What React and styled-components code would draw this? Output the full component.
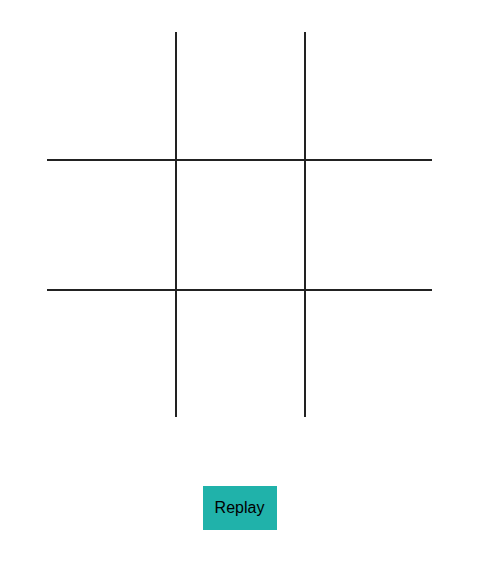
import React, { useState } from "react";
import styled, { createGlobalStyle } from "styled-components";

const GlobalStyle = createGlobalStyle`
  body {
    margin: 0;
    background: #fff;
    font-family: "Liberation Sans", Arial, sans-serif;
  }
`;

const App = () => {
  const [cells, setCells] = useState(Array(9).fill(null));
  const [xNext, setXNext] = useState(true);

  const play = (i) => {
    if (cells[i]) return;
    const next = [...cells];
    next[i] = xNext ? "X" : "O";
    setCells(next);
    setXNext(!xNext);
  };

  const replay = () => {
    setCells(Array(9).fill(null));
    setXNext(true);
  };

  return (
    <>
      <GlobalStyle />
      <Wrapper>
        <Board>
          {cells.map((value, i) => (
            <Cell
              key={i}
              $right={i % 3 < 2}
              $bottom={i < 6}
              onClick={() => play(i)}
            >
              {value}
            </Cell>
          ))}
        </Board>
        <ReplayButton onClick={replay}>Replay</ReplayButton>
      </Wrapper>
    </>
  );
};

export default App;

const Wrapper = styled.main`
  width: 385px;
  padding: 32px 0 0 47px;
  display: flex;
  flex-direction: column;
  align-items: center;
  gap: 69px;
`;

const Board = styled.div`
  display: grid;
  grid-template-columns: 130px 129px 126px;
  grid-template-rows: 129px 130px 126px;
  width: 385px;
`;

const Cell = styled.div`
  box-sizing: border-box;
  border-right: ${({ $right }) => ($right ? "2px solid #222" : "none")};
  border-bottom: ${({ $bottom }) => ($bottom ? "2px solid #222" : "none")};
  display: grid;
  place-items: center;
  font-size: 64px;
  color: #222;
  cursor: pointer;
`;

const ReplayButton = styled.button`
  width: 74px;
  height: 44px;
  border: none;
  background-color: #20b2aa;
  color: #000;
  font-family: "Liberation Sans", Arial, sans-serif;
  font-size: 16px;
  cursor: pointer;
`;
